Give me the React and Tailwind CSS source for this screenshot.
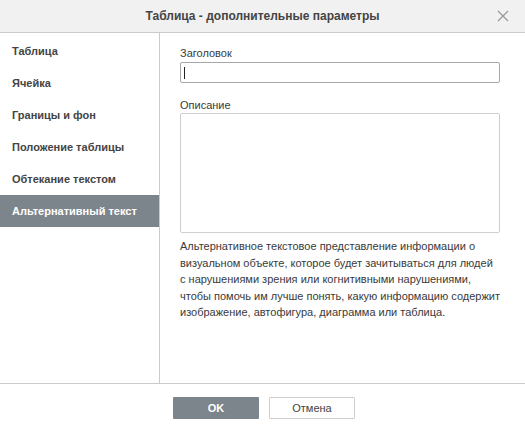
import React from 'react'

const items = ['Таблица', 'Ячейка', 'Границы и фон', 'Положение таблицы', 'Обтекание текстом', 'Альтернативный текст']

export default function App() {
  const active = 5
  return (
    <div className="w-[525px] h-[432px] bg-white flex flex-col text-[#444] text-[11px]" style={{ fontFamily: 'Arial, "Liberation Sans", sans-serif' }}>
      {/* Header */}
      <div className="h-[33px] shrink-0 bg-[#f1f1f1] border-b border-[#cbcbcb] flex items-center justify-center relative">
        <span className="text-[12px] font-bold text-[#444]">Таблица - дополнительные параметры</span>
        <svg className="absolute right-[16px] top-[10px]" width="12" height="12" viewBox="0 0 12 12">
          <path d="M1 1 L11 11 M11 1 L1 11" stroke="#989898" strokeWidth="1.2" />
        </svg>
      </div>

      <div className="flex flex-1 min-h-0 border-b border-[#cbcbcb]">
        {/* Sidebar */}
        <div className="w-[160px] shrink-0 border-r border-[#cbcbcb] pt-[2px]">
          {items.map((it, i) => (
            <div
              key={it}
              className={`h-[32px] flex items-center pl-[12px] font-bold ${i === active ? 'bg-[#7d858c] text-white' : 'text-[#444]'}`}
            >
              {it}
            </div>
          ))}
        </div>

        {/* Content */}
        <div className="flex-1 pl-[20px] pr-[25px] pt-[12px] text-[#3a3a3a]">
          <div className="leading-[16px]">Заголовок</div>
          <div className="mt-[1px] h-[21px] border border-[#a7a7a7] rounded-[2px] flex items-center pl-[3px]">
            <div className="w-px h-[12px] bg-[#222]" />
          </div>
          <div className="mt-[14px] leading-[16px]">Описание</div>
          <div className="h-[120px] border border-[#cfcfcf] rounded-[2px]" />
          <p className="mt-[5px] leading-[16.5px]">
            Альтернативное текстовое представление информации о визуальном объекте, которое будет зачитываться для людей
            с нарушениями зрения или когнитивными нарушениями, чтобы помочь им лучше понять, какую информацию содержит
            изображение, автофигура, диаграмма или таблица.
          </p>
        </div>
      </div>

      {/* Footer */}
      <div className="h-[48px] shrink-0 flex items-center justify-center gap-[10px] pl-[3px]">
        <button className="w-[86px] h-[22px] bg-[#7d858c] text-white font-bold text-[11px] rounded-[1px]">OK</button>
        <button className="w-[86px] h-[22px] bg-white border border-[#cfcfcf] text-[#444] text-[11px] rounded-[1px]">Отмена</button>
      </div>
    </div>
  )
}
